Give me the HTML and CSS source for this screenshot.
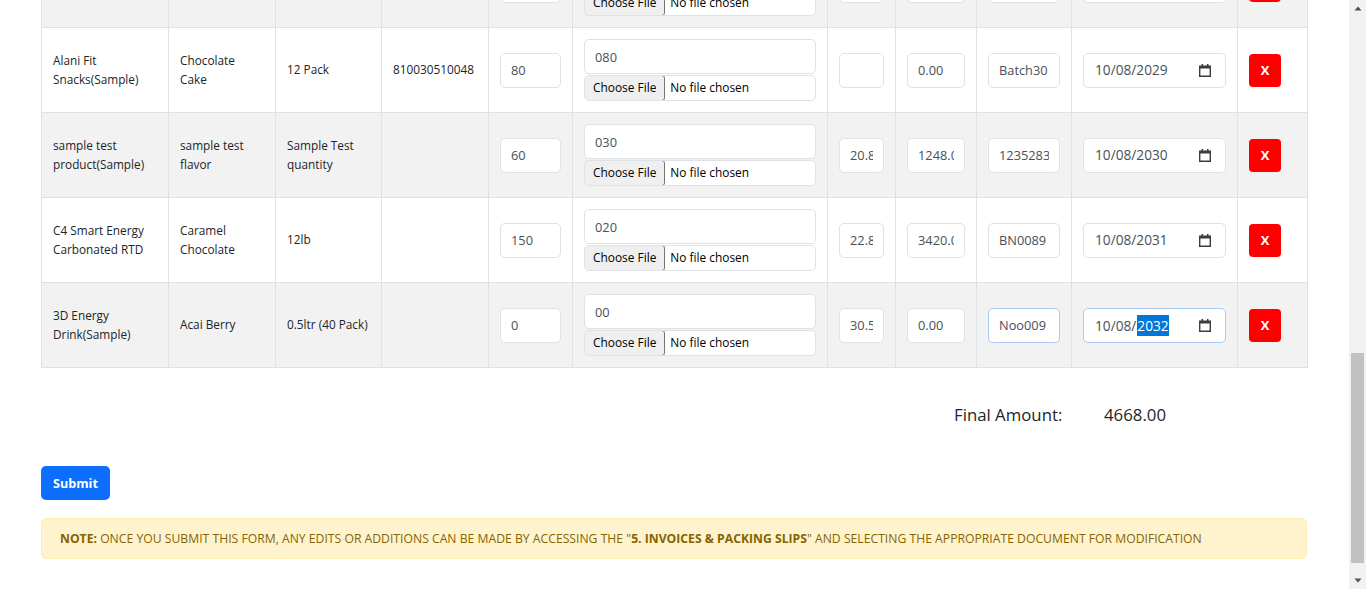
FILE: index.html
```html
<!DOCTYPE html>
<html lang="en">
<head>
<meta charset="utf-8">
<title>Packing items</title>
<link rel="stylesheet" href="styles.css">
</head>
<body>
<div class="page">
  <main class="content">
    <table class="items">
      <colgroup>
        <col class="w-product"><col class="w-flavor"><col class="w-size"><col class="w-upc"><col class="w-qty"><col class="w-lot"><col class="w-price"><col class="w-total"><col class="w-batch"><col class="w-date"><col class="w-remove">
      </colgroup>
      <tbody>
        <tr>
          <td>Celsius</td>
          <td>Orange</td>
          <td>12 Pack</td>
          <td></td>
          <td><input class="field" type="text" value="40"></td>
          <td>
            <input class="field" type="text" value="040">
            <div class="file"><span class="file-btn">Choose File</span><span class="file-name">No file chosen</span></div>
          </td>
          <td><input class="field" type="text" value=""></td>
          <td><input class="field" type="text" value="0.00"></td>
          <td><input class="field" type="text" value="Batch20"></td>
          <td><div class="date"><span class="date-text">10/08/2028</span><svg class="cal" width="12" height="13" viewBox="0 0 12 13"><path fill-rule="evenodd" d="M2.5 0h1.6v1.6h3.8V0h1.6v1.6H12V13H0V1.6h2.5zM1.4 4.4v7.2h9.2V4.4z"/></svg></div></td>
          <td><button class="btn-remove" type="button">X</button></td>
        </tr>
        <tr>
          <td>Alani Fit Snacks(Sample)</td>
          <td>Chocolate Cake</td>
          <td>12 Pack</td>
          <td>810030510048</td>
          <td><input class="field" type="text" value="80"></td>
          <td>
            <input class="field" type="text" value="080">
            <div class="file"><span class="file-btn">Choose File</span><span class="file-name">No file chosen</span></div>
          </td>
          <td><input class="field" type="text" value=""></td>
          <td><input class="field" type="text" value="0.00"></td>
          <td><input class="field" type="text" value="Batch30"></td>
          <td><div class="date"><span class="date-text">10/08/2029</span><svg class="cal" width="12" height="13" viewBox="0 0 12 13"><path fill-rule="evenodd" d="M2.5 0h1.6v1.6h3.8V0h1.6v1.6H12V13H0V1.6h2.5zM1.4 4.4v7.2h9.2V4.4z"/></svg></div></td>
          <td><button class="btn-remove" type="button">X</button></td>
        </tr>
        <tr>
          <td>sample test product(Sample)</td>
          <td>sample test flavor</td>
          <td>Sample Test quantity</td>
          <td></td>
          <td><input class="field" type="text" value="60"></td>
          <td>
            <input class="field" type="text" value="030">
            <div class="file"><span class="file-btn">Choose File</span><span class="file-name">No file chosen</span></div>
          </td>
          <td><input class="field" type="text" value="20.80"></td>
          <td><input class="field" type="text" value="1248.00"></td>
          <td><input class="field" type="text" value="12352834"></td>
          <td><div class="date"><span class="date-text">10/08/2030</span><svg class="cal" width="12" height="13" viewBox="0 0 12 13"><path fill-rule="evenodd" d="M2.5 0h1.6v1.6h3.8V0h1.6v1.6H12V13H0V1.6h2.5zM1.4 4.4v7.2h9.2V4.4z"/></svg></div></td>
          <td><button class="btn-remove" type="button">X</button></td>
        </tr>
        <tr>
          <td>C4 Smart Energy Carbonated RTD</td>
          <td>Caramel Chocolate</td>
          <td>12lb</td>
          <td></td>
          <td><input class="field" type="text" value="150"></td>
          <td>
            <input class="field" type="text" value="020">
            <div class="file"><span class="file-btn">Choose File</span><span class="file-name">No file chosen</span></div>
          </td>
          <td><input class="field" type="text" value="22.80"></td>
          <td><input class="field" type="text" value="3420.00"></td>
          <td><input class="field" type="text" value="BN0089"></td>
          <td><div class="date"><span class="date-text">10/08/2031</span><svg class="cal" width="12" height="13" viewBox="0 0 12 13"><path fill-rule="evenodd" d="M2.5 0h1.6v1.6h3.8V0h1.6v1.6H12V13H0V1.6h2.5zM1.4 4.4v7.2h9.2V4.4z"/></svg></div></td>
          <td><button class="btn-remove" type="button">X</button></td>
        </tr>
        <tr>
          <td>3D Energy Drink(Sample)</td>
          <td>Acai Berry</td>
          <td>0.5ltr (40 Pack)</td>
          <td></td>
          <td><input class="field" type="text" value="0"></td>
          <td>
            <input class="field" type="text" value="00">
            <div class="file"><span class="file-btn">Choose File</span><span class="file-name">No file chosen</span></div>
          </td>
          <td><input class="field" type="text" value="30.50"></td>
          <td><input class="field" type="text" value="0.00"></td>
          <td><input class="field field-active" type="text" value="Noo009"></td>
          <td><div class="date date-active"><span class="date-text">10/08/<span class="sel">2032</span></span><svg class="cal" width="12" height="13" viewBox="0 0 12 13"><path fill-rule="evenodd" d="M2.5 0h1.6v1.6h3.8V0h1.6v1.6H12V13H0V1.6h2.5zM1.4 4.4v7.2h9.2V4.4z"/></svg></div></td>
          <td><button class="btn-remove" type="button">X</button></td>
        </tr>
      </tbody>
    </table>

    <div class="total">
      <span class="total-label">Final Amount:</span>
      <span class="total-value">4668.00</span>
    </div>

    <button class="btn-submit" type="button">Submit</button>

    <div class="note"><b>NOTE:</b>&nbsp;ONCE YOU SUBMIT THIS FORM, ANY EDITS OR ADDITIONS CAN BE MADE BY ACCESSING THE "<b>5. INVOICES &amp; PACKING SLIPS</b>" AND SELECTING THE APPROPRIATE DOCUMENT FOR MODIFICATION</div>
  </main>

  <div class="scrollbar">
    <div class="sb-arrow"><svg width="8" height="5" viewBox="0 0 8 5"><path d="M0.5 4.5L4 0.5L7.5 4.5z"/></svg></div>
    <div class="sb-track"><div class="sb-thumb"></div></div>
    <div class="sb-arrow"><svg width="8" height="5" viewBox="0 0 8 5"><path d="M0.5 0.5L4 4.5L7.5 0.5z"/></svg></div>
  </div>
</div>
</body>
</html>
```

FILE: styles.css
```css
* {
  box-sizing: border-box;
}

html,
body {
  margin: 0;
  height: 100%;
}

body {
  font-family: "Open Sans", "Noto Sans", sans-serif;
  color: #212529;
  background: #fff;
  overflow: hidden;
}

.page {
  display: flex;
  height: 589px;
}

.content {
  flex: 1;
  min-width: 0;
  padding: 0 42px 0 41px;
}

/* ---------- table ---------- */
.items {
  width: 100%;
  table-layout: fixed;
  border-collapse: collapse;
  margin-top: -58px;
  font-size: 11.8px;
  line-height: 19.5px;
}

.w-product { width: 127px; }
.w-flavor { width: 107px; }
.w-size { width: 106px; }
.w-upc { width: 107px; }
.w-qty { width: 84px; }
.w-lot { width: 255px; }
.w-price { width: 68px; }
.w-total { width: 81px; }
.w-batch { width: 95px; }
.w-date { width: 166px; }
.w-remove { width: 70px; }

.items td {
  border: 1px solid #dee2e6;
  padding: 11px;
  vertical-align: middle;
  background: #fff;
}

.items tr:nth-child(odd) td {
  background: #f2f2f2;
}

.field {
  display: block;
  width: 100%;
  height: 35px;
  margin: 0;
  padding: 0 10px;
  font-family: "Open Sans", "Noto Sans", sans-serif;
  font-size: 12.8px;
  color: #495057;
  background: #fff;
  border: 1px solid #dee2e6;
  border-radius: 5px;
  outline: none;
}

.field-active {
  border-color: #a9cbf7;
}

.file {
  display: flex;
  align-items: center;
  height: 26px;
  margin-top: 1px;
  background: #fff;
  border: 1px solid #dee2e6;
  border-radius: 5px;
  font-size: 11.9px;
  color: #000;
  white-space: nowrap;
  overflow: hidden;
}

.file-btn {
  display: flex;
  align-items: center;
  height: 26px;
  margin: -1px 5px -1px -1px;
  padding: 0 8px;
  background: #efefef;
  border: 1px solid #767676;
  border-radius: 3px;
}

.date {
  display: flex;
  align-items: center;
  justify-content: space-between;
  height: 35px;
  padding: 0 14px 0 11px;
  background: #fff;
  border: 1px solid #dee2e6;
  border-radius: 5px;
  font-size: 13.7px;
  color: #495057;
  white-space: nowrap;
}

.date-active {
  border-color: #a9cbf7;
}

.date .sel {
  display: inline-block;
  margin-left: 1px;
  line-height: 21px;
  background: #0078d7;
  color: #fff;
}

.cal {
  fill: #3d3d3d;
  flex: none;
}

.btn-remove {
  display: block;
  width: 32px;
  height: 33px;
  padding: 0;
  background: #ff0000;
  color: #fff;
  border: 0;
  border-radius: 4px;
  font-family: "Open Sans", "Noto Sans", sans-serif;
  font-size: 13px;
  font-weight: 700;
}

/* ---------- total ---------- */
.total {
  display: flex;
  justify-content: flex-end;
  margin-top: 34px;
  padding-right: 141px;
  font-size: 16.8px;
  line-height: 25px;
}

.total-label {
  width: 150px;
}

/* ---------- submit ---------- */
.btn-submit {
  display: block;
  margin-top: 39px;
  height: 34px;
  padding: 0 12px;
  background: #0d6efd;
  color: #fff;
  border: 0;
  border-radius: 5px;
  font-family: "Open Sans", "Noto Sans", sans-serif;
  font-size: 12.6px;
  font-weight: 700;
}

/* ---------- note ---------- */
.note {
  display: flex;
  align-items: center;
  margin-top: 18px;
  height: 41px;
  padding: 0 18px;
  background: #fff3cd;
  border: 1px solid #ffecb5;
  border-radius: 5px;
  color: #856404;
  font-size: 12.2px;
  white-space: pre;
}

/* ---------- scrollbar ---------- */
.scrollbar {
  flex: none;
  width: 17px;
  display: flex;
  flex-direction: column;
  background: #f1f1f1;
}

.sb-arrow {
  height: 17px;
  display: flex;
  align-items: center;
  justify-content: center;
  fill: #505050;
}

.sb-track {
  flex: 1;
  padding: 0 2px;
}

.sb-thumb {
  margin-top: 336px;
  height: 210px;
  background: #c1c1c1;
}
```
